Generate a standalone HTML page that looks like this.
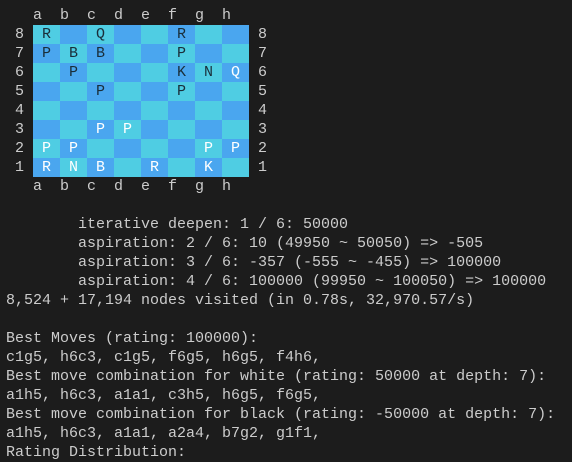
<!DOCTYPE html>
<html><head><style>
html,body{margin:0;padding:0;background:#1c1c1c;width:572px;height:453px;overflow:hidden}
pre{margin:0;position:absolute;left:6px;top:6px;font-family:"Liberation Mono",monospace;font-size:15px;line-height:19px;color:#cccccc;white-space:pre}
pre span{display:inline-block;height:19px;width:27px;vertical-align:top;text-align:center}
.l{background:#4fcde3}.d{background:#4aa6ef}
.w{color:#ffffff}.b{color:#1a2e3a}
</style></head><body><pre>   a  b  c  d  e  f  g  h
 8 <span class="l b">R</span><span class="d"></span><span class="l b">Q</span><span class="d"></span><span class="l"></span><span class="d b">R</span><span class="l"></span><span class="d"></span> 8
 7 <span class="d b">P</span><span class="l b">B</span><span class="d b">B</span><span class="l"></span><span class="d"></span><span class="l b">P</span><span class="d"></span><span class="l"></span> 7
 6 <span class="l"></span><span class="d b">P</span><span class="l"></span><span class="d"></span><span class="l"></span><span class="d b">K</span><span class="l b">N</span><span class="d w">Q</span> 6
 5 <span class="d"></span><span class="l"></span><span class="d b">P</span><span class="l"></span><span class="d"></span><span class="l b">P</span><span class="d"></span><span class="l"></span> 5
 4 <span class="l"></span><span class="d"></span><span class="l"></span><span class="d"></span><span class="l"></span><span class="d"></span><span class="l"></span><span class="d"></span> 4
 3 <span class="d"></span><span class="l"></span><span class="d w">P</span><span class="l w">P</span><span class="d"></span><span class="l"></span><span class="d"></span><span class="l"></span> 3
 2 <span class="l w">P</span><span class="d w">P</span><span class="l"></span><span class="d"></span><span class="l"></span><span class="d"></span><span class="l w">P</span><span class="d w">P</span> 2
 1 <span class="d w">R</span><span class="l w">N</span><span class="d w">B</span><span class="l"></span><span class="d w">R</span><span class="l"></span><span class="d w">K</span><span class="l"></span> 1
   a  b  c  d  e  f  g  h

        iterative deepen: 1 / 6: 50000
        aspiration: 2 / 6: 10 (49950 ~ 50050) => -505
        aspiration: 3 / 6: -357 (-555 ~ -455) => 100000
        aspiration: 4 / 6: 100000 (99950 ~ 100050) => 100000
8,524 + 17,194 nodes visited (in 0.78s, 32,970.57/s)

Best Moves (rating: 100000):
c1g5, h6c3, c1g5, f6g5, h6g5, f4h6,
Best move combination for white (rating: 50000 at depth: 7):
a1h5, h6c3, a1a1, c3h5, h6g5, f6g5,
Best move combination for black (rating: -50000 at depth: 7):
a1h5, h6c3, a1a1, a2a4, b7g2, g1f1,
Rating Distribution:</pre></body></html>
